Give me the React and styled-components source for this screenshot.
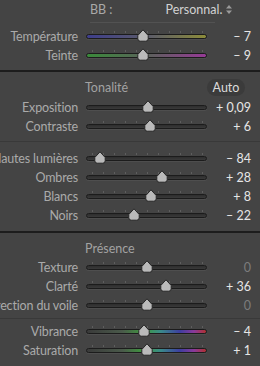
import React from "react";
import styled, { createGlobalStyle } from "styled-components";

const Global = createGlobalStyle`
  html, body {
    margin: 0;
    padding: 0;
    background: #444444;
    overflow: hidden;
  }
  body {
    font-family: Lato, "Open Sans", sans-serif;
    font-size: 12.5px;
  }
`;

// track fills per slider kind
const fills = {
  plain: "linear-gradient(#2e2e2e, #3a3a3a)",
  temp: "linear-gradient(90deg, #3e3e8c, #5a5a6a 50%, #8c8c3a)",
  tint: "linear-gradient(90deg, #3a8a3a, #5a625a 50%, #963a96)",
  color:
    "linear-gradient(90deg, #3a3a3a 0%, #4a5a4a 30%, #3e9a3e 48%, #3a8a8a 62%, #3e3ea0 78%, #8a3a9a 90%, #b03030 100%)",
};

const sections = [
  {
    header: null,
    rows: [
      { label: "Température", value: "– 7", pos: 0.468, fill: "temp" },
      { label: "Teinte", value: "– 9", pos: 0.468, fill: "tint" },
    ],
  },
  {
    header: "Tonalité",
    auto: true,
    groups: [
      [
        { label: "Exposition", value: "+ 0,09", pos: 0.514, noTicks: true },
        { label: "Contraste", value: "+ 6", pos: 0.53 },
      ],
      [
        { label: "Hautes lumières", value: "– 84", pos: 0.08 },
        { label: "Ombres", value: "+ 28", pos: 0.64 },
        { label: "Blancs", value: "+ 8", pos: 0.54 },
        { label: "Noirs", value: "– 22", pos: 0.39 },
      ],
    ],
  },
  {
    header: "Présence",
    groups: [
      [
        { label: "Texture", value: "0", pos: 0.5, zero: true },
        { label: "Clarté", value: "+ 36", pos: 0.68 },
        { label: "Correction du voile", value: "0", pos: 0.5, zero: true },
      ],
      [
        { label: "Vibrance", value: "– 4", pos: 0.48, fill: "color" },
        { label: "Saturation", value: "+ 1", pos: 0.505, fill: "color" },
      ],
    ],
  },
];

const Panel = styled.div`
  width: 260px;
  height: 366px;
  background: #444444;
  overflow: hidden;
`;

const WbHeader = styled.div`
  display: flex;
  align-items: center;
  height: 18px;
  padding-left: 90px;
  color: #a9a9a9;
`;

const Preset = styled.span`
  display: flex;
  align-items: center;
  gap: 4px;
  margin-left: 53px;
  color: #d2d2d2;
`;

const ShortRule = styled.div`
  margin: 4px 0 0 90px;
  width: 125px;
  height: 1px;
  background: #525252;
`;

const Rows = styled.div`
  display: flex;
  flex-direction: column;
  padding: ${(p) => p.$pad || "0"};
`;

const Row = styled.div`
  display: flex;
  align-items: center;
  height: 19px;
`;

const Label = styled.div`
  width: 78px;
  flex-shrink: 0;
  display: flex;
  justify-content: flex-end;
  white-space: nowrap;
  letter-spacing: -0.15px;
  color: #aaaaaa;
`;

const SliderBox = styled.div`
  position: relative;
  width: 121px;
  height: 19px;
  margin-left: 8px;
  flex-shrink: 0;
  display: flex;
  align-items: center;
`;

const Bar = styled.div`
  width: 100%;
  height: 5px;
  box-sizing: border-box;
  border: 1px solid #1c1c1c;
  border-radius: 3px;
  background: ${(p) => fills[p.$fill] || fills.plain};
  box-shadow: 0 1px 0 #4e4e4e;
`;

const Ticks = styled.div`
  position: absolute;
  left: 6px;
  right: 4px;
  top: 4px;
  height: 2px;
  background: repeating-linear-gradient(
    90deg,
    #5e5e5e 0 1px,
    transparent 1px 11px
  );
`;

const Thumb = styled.svg`
  position: absolute;
  top: 2px;
  width: 12px;
  height: 13px;
  margin-left: -6px;
`;

const Value = styled.div`
  width: 44px;
  text-align: right;
  white-space: nowrap;
  color: ${(p) => (p.$zero ? "#7c7c7c" : "#e6e6e6")};
`;

const DarkRule = styled.div`
  height: 2px;
  background: #1d1d1d;
`;

const SoftRule = styled.div`
  height: 1px;
  background: #393939;
`;

const SectionHead = styled.div`
  display: flex;
  align-items: center;
  justify-content: space-between;
  height: 17px;
  padding: 7px 15px 0 85px;
  color: #a2a2a2;
`;

const AutoButton = styled.div`
  width: 38px;
  height: 17px;
  border-radius: 9px;
  background: #3b3b3b;
  color: #dcdcdc;
  display: flex;
  align-items: center;
  justify-content: center;
`;

const UpDown = () => (
  <svg width="6" height="9" viewBox="0 0 6 9">
    <path d="M3 0 L6 3.5 L0 3.5 Z M3 9 L6 5.5 L0 5.5 Z" fill="#9a9a9a" />
  </svg>
);

const Slider = ({ row }) => (
  <Row>
    <Label>{row.label}</Label>
    <SliderBox>
      {!row.noTicks && <Ticks />}
      <Bar $fill={row.fill} />
      <Thumb viewBox="0 0 12 13" style={{ left: `${5 + row.pos * 111}px` }}>
        <path
          d="M6 0.8 L11.2 6.5 L11.2 9.8 Q11.2 12.2 8.8 12.2 L3.2 12.2 Q0.8 12.2 0.8 9.8 L0.8 6.5 Z"
          fill="#bababa"
          stroke="#262626"
          strokeWidth="1"
        />
      </Thumb>
    </SliderBox>
    <Value $zero={row.zero}>{row.value}</Value>
  </Row>
);

export default function App() {
  const [wb, tone, presence] = sections;
  return (
    <Panel>
      <Global />
      <WbHeader>
        <span>BB :</span>
        <Preset>
          Personnal.
          <UpDown />
        </Preset>
      </WbHeader>
      <ShortRule />
      <Rows $pad="4px 0 5px">
        {wb.rows.map((r) => (
          <Slider key={r.label} row={r} />
        ))}
      </Rows>
      <DarkRule />
      <SectionHead>
        <span>{tone.header}</span>
        <AutoButton>Auto</AutoButton>
      </SectionHead>
      <Rows $pad="2px 0 5px">
        {tone.groups[0].map((r) => (
          <Slider key={r.label} row={r} />
        ))}
      </Rows>
      <SoftRule />
      <Rows $pad="7px 0 6px">
        {tone.groups[1].map((r) => (
          <Slider key={r.label} row={r} />
        ))}
      </Rows>
      <DarkRule />
      <SectionHead>
        <span>{presence.header}</span>
      </SectionHead>
      <Rows $pad="1px 0 3px">
        {presence.groups[0].map((r) => (
          <Slider key={r.label} row={r} />
        ))}
      </Rows>
      <SoftRule />
      <Rows $pad="3px 0 0">
        {presence.groups[1].map((r) => (
          <Slider key={r.label} row={r} />
        ))}
      </Rows>
    </Panel>
  );
}
